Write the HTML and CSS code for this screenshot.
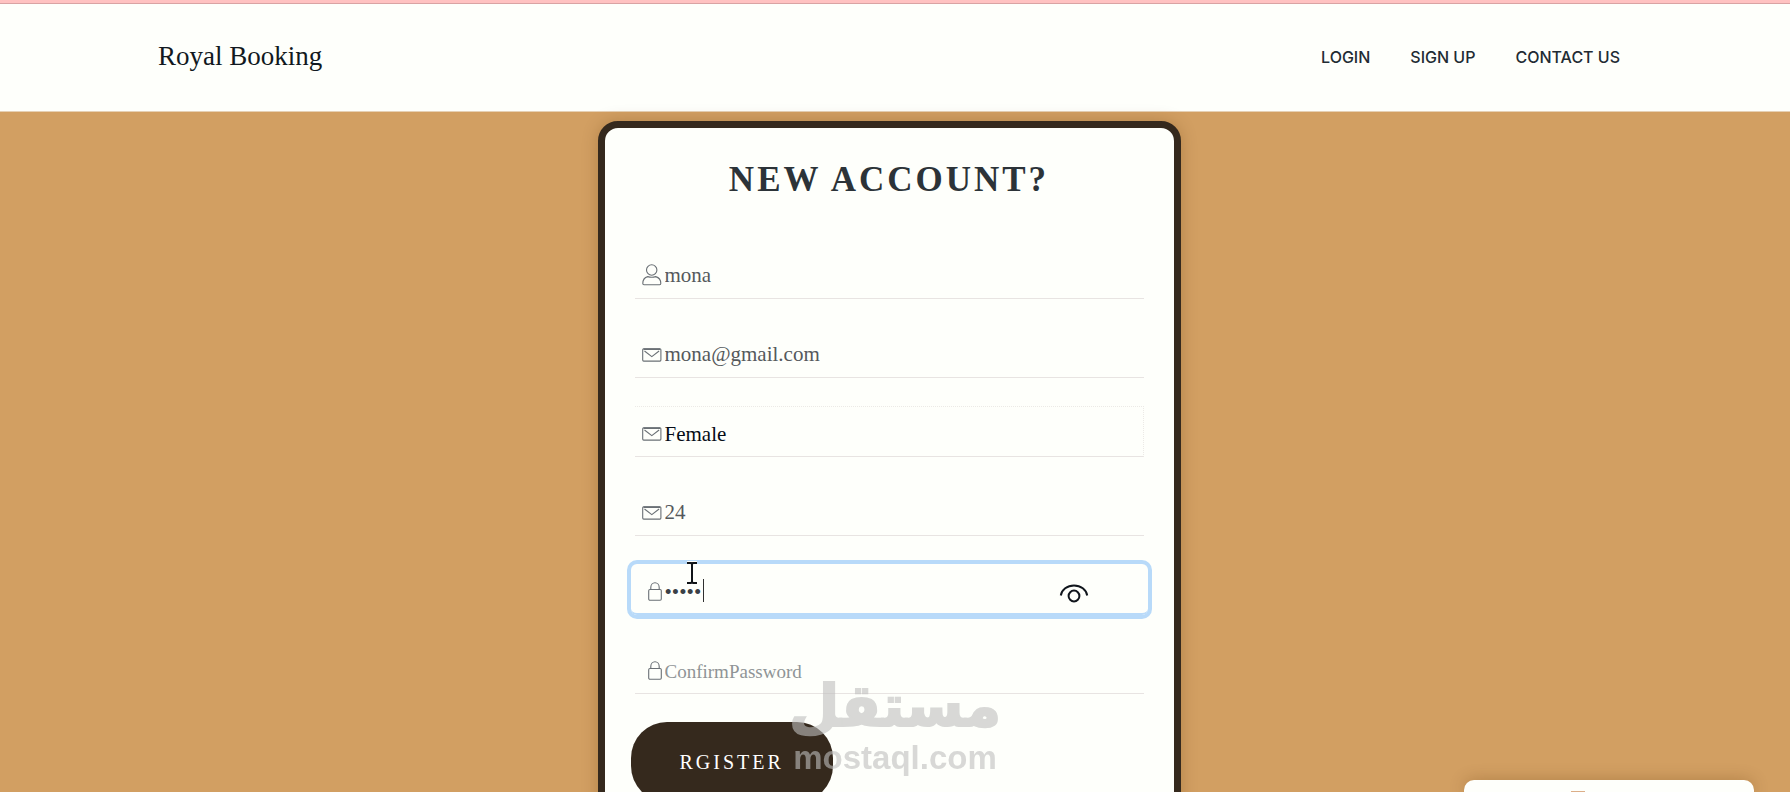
FILE: index.html
```html
<!DOCTYPE html>
<html lang="en">
<head>
<meta charset="utf-8">
<meta name="viewport" content="width=device-width, initial-scale=1">
<title>Royal Booking</title>
<link rel="stylesheet" href="styles.css">
</head>
<body>
<svg class="symbols" aria-hidden="true">
  <symbol id="icon-mail" viewBox="0 0 20 14">
    <rect x="0.7" y="0.7" width="18.2" height="12.4" rx="1"/>
    <path d="M1.5 1.2h16.6" stroke-width="1.6"/>
    <path d="M2.500 3l7.300 5.600 7.300-5.600"/>
  </symbol>
  <symbol id="icon-lock" viewBox="0 0 14 19">
    <rect x="0.7" y="7.500" width="12.600" height="10.700" rx="1.200"/>
    <path d="M2.800 7.500V5.500a4.200 4.700 0 0 1 8.400 0v2"/>
  </symbol>
</svg>

<header class="site-header">
  <div class="container header-row">
    <a class="brand" href="#">Royal Booking</a>
    <nav class="nav">
      <a href="#">LOGIN</a>
      <a href="#">SIGN UP</a>
      <a href="#">CONTACT US</a>
    </nav>
  </div>
</header>

<main class="page">
  <form class="card">
    <h1 class="title">NEW ACCOUNT?</h1>

    <label class="field">
      <span class="icon-box icon-user"><svg class="icon" width="20" height="22" viewBox="0 0 20 22" aria-hidden="true"><circle cx="9.700" cy="6" r="5.200"/><path d="M5.800 12.600C2.500 13.500.8 16 .8 19.500q0 1.200 1.200 1.200h15.600q1.200 0 1.200-1.200C18.800 16 17 13.500 13.700 12.600q-3.900 1.200-7.900 0z"/></svg></span>
      <input class="control" type="text" value="mona" aria-label="Name">
    </label>

    <label class="field">
      <span class="icon-box"><svg class="icon" width="20" height="14" aria-hidden="true"><use href="#icon-mail"/></svg></span>
      <input class="control" type="email" value="mona@gmail.com" aria-label="Email">
    </label>

    <label class="field field-select">
      <span class="icon-box"><svg class="icon" width="20" height="14" aria-hidden="true"><use href="#icon-mail"/></svg></span>
      <select class="control" aria-label="Gender">
        <option>Female</option>
        <option>Male</option>
      </select>
    </label>

    <label class="field">
      <span class="icon-box"><svg class="icon" width="20" height="14" aria-hidden="true"><use href="#icon-mail"/></svg></span>
      <input class="control" type="text" value="24" aria-label="Age">
    </label>

    <div class="field field-password field-active">
      <span class="icon-box icon-lock"><svg class="icon" width="14" height="19" aria-hidden="true"><use href="#icon-lock"/></svg></span>
      <input class="control" type="password" value="12345" aria-label="Password">
      <button class="reveal" type="button" aria-label="Show password"><svg width="30" height="20" viewBox="0 0 30 20" aria-hidden="true"><path d="M1.800 12.500a13.300 11.500 0 0 1 26.400 0"/><circle cx="15" cy="13" r="5.400"/></svg></button>
      <span class="caret"></span>
      <svg class="pointer" width="12" height="24" viewBox="0 0 12 24" aria-hidden="true"><path class="halo" d="M1 2h4l1 1 1-1h4M6 3v18M1 22h4l1-1 1 1h4"/><path d="M1 2h4l1 1 1-1h4M6 3v18M1 22h4l1-1 1 1h4"/></svg>
    </div>

    <label class="field field-password">
      <span class="icon-box icon-lock"><svg class="icon" width="14" height="19" aria-hidden="true"><use href="#icon-lock"/></svg></span>
      <input class="control" type="password" placeholder="ConfirmPassword" aria-label="Confirm password">
    </label>

    <button class="submit" type="submit">RGISTER</button>
  </form>
</main>

<div class="watermark">
  <span class="watermark-ar" lang="ar" dir="rtl">مستقل</span>
  <span class="watermark-en">mostaql.com</span>
</div>

<aside class="popup"><span class="popup-badge"></span></aside>
</body>
</html>
```

FILE: styles.css
```css
* {
  box-sizing: border-box;
}

html {
  scrollbar-width: none;
}

body {
  margin: 0;
  background: #d29f62;
  font-family: "Liberation Serif", "Times New Roman", serif;
  color: #212529;
}

.symbols {
  display: none;
}

/* Header */
.site-header {
  background: #fefffb;
  border-top: 3px solid #ffc2c1;
  border-bottom: 1px solid #e6d0b4;
  box-shadow: inset 0 1px 0 #d9a3a3;
  padding-right: 12px;
}

.container {
  max-width: 1462px;
  margin: 0 auto;
}

.header-row {
  display: flex;
  align-items: center;
  justify-content: space-between;
  min-height: 108px;
}

.brand {
  padding-bottom: 2px;
  font-size: 27px;
  line-height: 32px;
  color: #111820;
  text-decoration: none;
}

.nav {
  display: flex;
  gap: 40px;
}

.nav a {
  font-family: Inter, "Open Sans", sans-serif;
  font-size: 16px;
  font-weight: 500;
  line-height: 24px;
  color: #222b33;
  text-decoration: none;
}

/* Form card */
.page {
  display: flex;
  justify-content: center;
  padding: 9px 12px 40px 0;
}

.card {
  width: 100%;
  max-width: 583px;
  padding: 31px 26px 40px;
  background: #fefffb;
  border: 7px solid #35291d;
  border-radius: 20px;
  box-shadow: 0 0 16px rgba(90, 50, 0, 0.25);
}

.title {
  margin: 0 0 47px;
  font-size: 35px;
  font-weight: 700;
  line-height: 42px;
  letter-spacing: 3px;
  text-align: center;
  color: #2c3338;
}

.field {
  position: relative;
  display: flex;
  align-items: center;
  gap: 3px;
  height: 51px;
  margin: 0 4px 28px;
  padding: 5px 7px 0;
  border-bottom: 1px solid #e8e4e2;
}

.field-select {
  border-top: 1px dotted #eceae6;
  border-right: 1px dotted #eceae6;
}

.field-password {
  padding-top: 7px;
}

.field-active {
  margin: 0 0 28px;
  padding: 8px 11px 0;
  border-bottom: 2px solid #b8daf9;
  border-radius: 6px;
  box-shadow: 0 0 0 4px #b8daf9;
}

.icon-box {
  display: flex;
  flex: none;
  justify-content: flex-end;
  width: 20px;
}

.icon-user {
  padding-bottom: 2px;
}

.icon-lock {
  padding-bottom: 3px;
}

.icon {
  fill: none;
  stroke: #6a7075;
  stroke-width: 1.1;
}

.control {
  flex: 1;
  min-width: 0;
  height: 32px;
  margin: 0;
  padding: 0;
  border: 0;
  outline: 0;
  background: transparent;
  appearance: none;
  font-family: inherit;
  font-size: 21px;
  color: #55595c;
}

.control::placeholder {
  font-size: 19px;
  color: #8f9496;
  opacity: 1;
}

select.control {
  color: #050c16;
}

.field-active .control {
  color: #3a4046;
}

.reveal {
  display: flex;
  flex: none;
  margin-right: 48px;
  padding: 0;
  border: 0;
  background: none;
}

.reveal svg {
  fill: none;
  stroke: #10151c;
  stroke-width: 2;
}

.caret {
  position: absolute;
  top: 15px;
  left: 72px;
  width: 1px;
  height: 23px;
  background: #303030;
}

.pointer {
  position: absolute;
  top: -3px;
  left: 55px;
  fill: none;
  stroke: #101418;
  stroke-width: 2;
}

.pointer .halo {
  stroke: #fefffb;
  stroke-width: 4;
}

.submit {
  height: 80px;
  padding: 0 49px;
  border: 0;
  border-radius: 36px;
  background: #35291d;
  color: #fff;
  font-family: inherit;
  font-size: 20px;
  letter-spacing: 3px;
}

/* Overlays */
.watermark {
  position: fixed;
  bottom: 14px;
  left: 0;
  right: 0;
  display: flex;
  flex-direction: column;
  align-items: center;
  color: #bebfbe;
  opacity: 0.6;
  pointer-events: none;
}

.watermark-ar {
  font-family: "DejaVu Sans", sans-serif;
  font-size: 58px;
  font-weight: 700;
  line-height: 64px;
  -webkit-text-stroke: 2px #bebfbe;
}

.watermark-en {
  font-family: "Liberation Sans", Arial, sans-serif;
  font-size: 33px;
  font-weight: 700;
  line-height: 40px;
}

.popup {
  position: fixed;
  right: 36px;
  bottom: 0;
  display: flex;
  justify-content: center;
  width: 290px;
  padding: 11px 62px 0 0;
  border-radius: 10px 10px 0 0;
  background: #fefffb;
  box-shadow: 0 0 16px rgba(90, 50, 0, 0.3);
}

.popup-badge {
  width: 14px;
  height: 1px;
  background: #dcae88;
}
```
